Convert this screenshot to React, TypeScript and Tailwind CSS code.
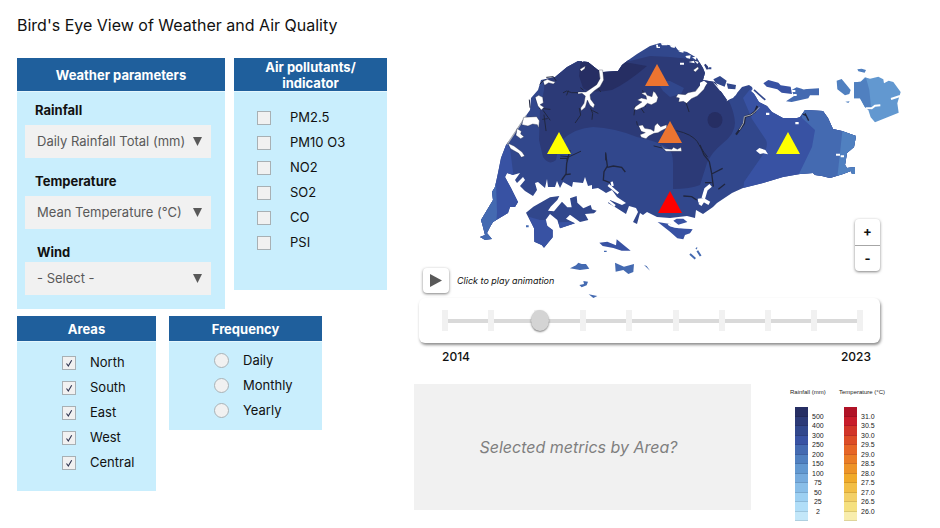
import { useId, useState } from "react";
import type { ReactNode } from "react";

const POLLUTANTS = ["PM2.5", "PM10 O3", "NO2", "SO2", "CO", "PSI"];
const AREAS = ["North", "South", "East", "West", "Central"];
const FREQUENCIES = ["Daily", "Monthly", "Yearly"];

const RAIN_COLORS = ["#262e63", "#2c3a77", "#31478c", "#3852a3", "#446ab1", "#5080c0", "#6298d0", "#76abdd", "#89bee8", "#9dd0f2", "#b1def8", "#c3e7f9"];
const RAIN_LABELS = ["500", "400", "300", "250", "200", "150", "100", "75", "50", "25", "2"];
const TEMP_COLORS = ["#b01226", "#c81c2a", "#d13428", "#dc4c26", "#e66526", "#ea7c26", "#ed9328", "#f0aa2a", "#f2be45", "#f3d067", "#f5e07f", "#f8edad"];
const TEMP_LABELS = ["31.0", "30.5", "30.0", "29.5", "29.0", "28.5", "28.0", "27.5", "27.0", "26.5", "26.0"];

const ISLAND =
  "M498 173 501 158 506 145 512 137 519 126 525 117 530 110 531 98 538 90 541 80 555 77 567 67 578 61 588 62 598 70 603 72 618 71 622 65 627 61 637 54 650 46 660 43 668 45 674 45 678 50 687 52 697 58 703 68 705 73 703 80 715 82 720 90 727 100 733 98 737 93 742 87 749 85 752 87 753 92 759 102 767 106 772 112 783 118 797 118 800 117 805 110 823 111 828 118 833 129 842 131 856 136 854 147 847 153 845 165 847 168 855 167 855 174 852 174 851 171 843 174 830 178 822 176 815 175 813 173 800 174 783 177 763 183 743 188 732 193 717 203 713 207 703 214 696 210 695 218 687 216 670 218 657 217 647 212 643 215 640 213 637 224 633 222 638 212 636 208 629 206 626 214 615 207 608 203 610 200 622 205 626 203 617 197 612 190 606 193 603 191 598 188 592 189 592 185 588 186 585 177 583 183 573 182 572 187 563 182 560 188 557 181 555 187 548 187 547 179 545 188 538 182 535 183 537 190 533 196 525 191 520 186 525 180 523 177 517 183 515 180 520 173 513 175 507 173 505 177 511 188 518 202 515 207 510 207 508 213 493 222 490 227 487 233 492 239 485 240 480 237 485 235 483 227 481 220 487 210 493 200 492 192 495 187Z";

type MarkerProps = { x: number; y: number; fill: string };

function Marker({ x, y, fill }: MarkerProps) {
  return <path d={`M${x} ${y}l12 22h-24z`} fill={fill} />;
}

function RainMap() {
  return (
    <svg viewBox="414 40 500 258" className="block w-full overflow-visible" role="img" aria-label="Rainfall map with station markers">
      <clipPath id="island">
        <path d={ISLAND} />
      </clipPath>
      <g clipPath="url(#island)">
        <rect x="470" y="40" width="400" height="210" fill="#31478c" />
        <path d="M546 60 544 90 540 110 539 140 543 157Q549 166 556 160 558 148 562 140 575 128 593 127 615 128 637 137 657 141 668 148 673 152 673 163V189Q690 189 700 185L707 163Q712 152 722 144 735 134 735 123 734 104 716 80L712 64 690 59 670 57 650 56 630 61 618 55Z" fill="#2c3a77" />
        <path d="M581 58 579 76 583 88Q590 94 612 90 627 83 647 66L630 63 610 60Z" fill="#262e63" />
        <ellipse cx="715" cy="120" rx="7.5" ry="8" fill="#262e63" />
        <path d="M656 80 670 81 684 88 681 94 670 97 663 91Z" fill="#31478c" />
        <path d="M475 140H509L513 172 520 210 470 245Z" fill="#3852a3" />
        <path d="M475 175 496 182 497 212 495 245H470Z" fill="#446ab1" />
        <path d="M756 82 743 98 752 119 766 140Q769 146 762 156L744 182 743 195H870V80Z" fill="#3852a3" />
        <path d="M801 100 802 118 815 130 812 147 797 178H870V100Z" fill="#446ab1" />
        <path d="M843 125 840 153 837 180H870V125Z" fill="#5080c0" />
      </g>

      {/* north-west and central reservoirs */}
      <g transform="translate(500 60) scale(.33333)" strokeLinecap="round" strokeLinejoin="round">
        <g fill="none" stroke="#20263f" strokeWidth="3">
          <path d="M190 98 200 93 215 98 232 98M200 105 205 93M238 145 242 165 226 188M272 145 278 160 276 178M278 152 294 160M290 80 302 95M405 140 402 165M420 140 432 158M432 102 428 92M432 125 436 140M558 128 567 155M412 195 410 185M130 152 150 180M132 165 138 212M128 178 142 176M118 145 150 148M140 52 160 50 168 62M120 72 130 62M88 120 90 142M182 288 208 290 242 274M206 290 200 300M317 278V300M462 258 486 264M250 90 242 84M480 5" />
          <path d="M530 212Q575 222 592 245 600 262 622 290" />
        </g>
        <path d="M78 168 22 252" stroke="#a8acb4" strokeWidth="4" />
        <g fill="#fff" stroke="#20263f" strokeWidth="1">
          <path d="M297 30 308 30 311 60 300 80 283 92 270 104 272 118 284 134 280 144 270 136 262 120 256 142 244 152 242 144 252 130 256 108 246 100 234 102 234 96 258 96 290 74 300 56Z" />
          <path d="M424 100 436 97 442 106 456 110 460 94 466 98 474 112 470 126 454 134 442 130 432 140 410 150 402 148 406 140 426 126 412 120 424 114 440 118 438 108Z" />
          <path d="M416 197 428 195 434 205 452 208 462 214 464 198 472 190 482 200 500 194 500 204 484 212 474 218 462 220 446 228 438 236 424 232 420 224 436 218 424 214Z" />
          <path d="M482 256 494 266 516 268 520 262 532 268 543 262 545 274 528 274 498 274Z" />
          <path d="M606 68 620 70 612 88 592 108 574 116 560 130 550 124 536 126 538 114 528 112 534 102 556 104 564 98 586 94Z" />
          <path d="M72 172 110 170 118 182 116 204 112 194 98 192 84 198 66 194Z" />
          <path d="M106 112 116 106 128 112 130 128 120 134 132 142 124 150 114 138Z" />
          <path d="M130 64 142 58 152 62 166 66 160 72 146 68 134 76Z" />
          <path d="M52 206 64 214 62 222 72 230 62 236 48 226Z" />
          <path d="M24 250 42 258 66 276 74 288 64 292 56 280 32 266Z" />
          <path d="M240 28 256 18 254 26 244 34Z" />
          <path d="M580 30 594 20 596 26 586 36Z" />
        </g>
        <g fill="#fff">
          <path d="M242 0 248 6 254 0ZM258 2 266 6 268 0ZM540 8h12v6h-12zM566 6 582 2 584 10ZM584 2 596 6 592 12Z" />
          <path d="M468-46h6v6h6v4h-10zM482-50h20v6h-16zM508-44 526-46 524-36 514-38ZM534-28 552-32 550-22 540-24ZM556-12 572-14 570-4 560-6ZM576-8 590-10 588 0ZM596 4 606 2 604 12Z" />
        </g>
        <path d="M612 14 624 18 620 30ZM626 22h8v6h-8z" fill="#31478c" />
      </g>

      {/* east coast, Ubin and Tekong */}
      <g transform="translate(700 30) scale(.33333)">
        <path d="M15 103 25 118" stroke="#2c3a77" strokeWidth="5" />
        <path d="M0 158 12 152 22 160 0 186ZM38 155 62 176 92 182 112 184 108 195 80 214 82 206 98 198 60 182Z" fill="#fff" />
        <path d="M40 148 60 138 80 152 74 170 48 160ZM80 160 108 165 106 178 84 176Z" fill="#31478c" />
        <path d="M158 178 198 212" stroke="#fff" strokeWidth="14" />
        <path d="M162 180 196 210" stroke="#31478c" strokeWidth="5" />
        <path d="M190 160 205 150 235 158 242 166 272 170 276 192 245 188 232 178 200 170Z" fill="#3852a3" />
        <path d="M275 180 290 172 310 178 357 175 357 196 330 196 325 205 275 216 258 214 282 198Z" fill="#446ab1" />
        <path d="M276 180h10v6h-10zM308 172h8v6h-8zM280 192h10v6h-10zM286 276h10v7h-10zM198 248h10v7h-10zM408 371h12v6h-12zM422 376h10v6h-10z" fill="#fff" />
        <path d="M410 152 425 147 438 163 452 180 448 192 435 196 412 178ZM472 118 485 116 498 120 494 128 475 124ZM436 215 449 214 445 219Z" fill="#5080c0" />
        <path d="M462 157 482 155 495 142 510 146 535 140 550 148 552 160 566 152 580 156 602 186 592 220 596 248 525 277 512 262 505 240 494 230 480 205 462 205Z" fill="#6298d0" />
        <path d="M462 157 482 155 498 143 508 180 514 240 505 240 494 230 480 205 462 205Z" fill="#5080c0" />
        <path d="M498 235 515 235 525 227 541 226M573 207 600 198" fill="none" stroke="#fff" strokeWidth="6" />
        <path d="M172 228 165 245 152 255 135 260 132 280 108 314" fill="none" stroke="#20263f" strokeWidth="6" />
        <path d="M178 232 160 250 152 255 133 260 130 280 118 300" fill="none" stroke="#a8acb4" strokeWidth="3" />
        <path d="M168 362 178 354 196 360 204 373 190 370 180 372Z" fill="#fff" />
        <path d="M308 252 320 258M315 250 326 272M0 345 12 375 28 395 35 430 40 470M35 432 68 415M15 458 35 458M55 478 75 462" fill="none" stroke="#20263f" strokeWidth="4" />
      </g>

      {/* Jurong, Sentosa and the southern islands */}
      <g transform="translate(470 150) scale(.33333)">
        <path d="M168 188 190 170 240 142 268 138 262 150 242 170 234 182 252 184 262 172 276 155 292 172 305 172 300 145 320 138 322 158 340 175 362 165 366 178 380 182 372 190 345 192 355 210 330 216 300 194 288 206 315 220 270 235 262 210 240 192 225 212 232 228 248 240 248 262 222 293 215 285 193 275 192 235Z" fill="#31478c" />
        <path d="M176 200 210 210 228 210 232 228 248 240 248 262 222 293 215 285 193 275 192 235ZM265 217 300 216 315 220 270 235Z" fill="#3852a3" />
        <path d="M563 216 600 222 612 232 668 238 660 250 645 255 640 268 622 265 600 245ZM610 212 620 206 640 206 652 216 625 224ZM388 278 412 275 438 286 440 268 460 284 482 302 455 302 430 294 398 288Z" fill="#3852a3" />
        <path d="M595 222Q610 235 660 232" fill="none" stroke="#fff" strokeWidth="6" />
        <path d="M300 355 318 346 325 338 335 342 348 342 358 356 330 360ZM435 338 462 350 492 342 490 366 475 372 460 360 437 365ZM522 345 530 348 540 362ZM328 405 342 402 340 393 354 395 350 406 335 412ZM356 433 382 438 370 444ZM168 226h8v6h-8zM402 302h8v4h-8z" fill="#446ab1" />
        <path d="M660 312 676 326M682 302 692 318M678 294 681 296" stroke="#446ab1" strokeWidth="6" />
        <path d="M684 152 700 150 718 160M700 145 708 118 722 106M690 165 700 150" fill="none" stroke="#fff" strokeWidth="11" />
        <path d="M415 152 435 168M415 105 435 122 445 130M425 95 428 108" fill="none" stroke="#fff" strokeWidth="7" />
        <path d="M407 10 412 48 402 65 400 90 420 98M412 52 430 48 455 52 466 66M300 0 290 40 288 72 275 90M270 25H296M288 74 302 72M640 138 665 140 680 150" fill="none" stroke="#20263f" strokeWidth="4" />
      </g>

      <Marker x={657} y={64} fill="#ec7430" />
      <Marker x={670} y={121} fill="#ec7430" />
      <Marker x={559} y={132} fill="#ffff00" />
      <Marker x={788} y={132} fill="#ffff00" />
      <Marker x={670} y={191} fill="#ff0000" />
    </svg>
  );
}

type PanelProps = { title: ReactNode; className: string; headClass: string; children: ReactNode };

function Panel({ title, className, headClass, children }: PanelProps) {
  return (
    <section className={`bg-[#c9eefd] ${className}`}>
      <h2 className={`flex items-center justify-center border-b border-[#e4f6fd] bg-[#1f5f9c] text-center text-[13px] leading-4 font-bold text-white ${headClass}`}>
        {title}
      </h2>
      {children}
    </section>
  );
}

type SelectFieldProps = { label: string; options: string[]; labelClass: string };

function SelectField({ label, options, labelClass }: SelectFieldProps) {
  const id = useId();
  return (
    <div>
      <label htmlFor={id} className={`block text-[13px] leading-5 font-bold ${labelClass}`}>
        {label}
      </label>
      <div className="relative">
        <select id={id} className="block h-[33px] w-full appearance-none bg-[#f1f1f1] pl-3 text-[13px] text-[#595959]">
          {options.map((o) => (
            <option key={o}>{o}</option>
          ))}
        </select>
        <svg viewBox="0 0 9 9" className="pointer-events-none absolute top-3 right-[9px] size-[9px]" aria-hidden="true">
          <path d="M0 0h9L4.500 9z" fill="#595959" />
        </svg>
      </div>
    </div>
  );
}

type CheckRowProps = { label: string; defaultChecked?: boolean };

function CheckRow({ label, defaultChecked }: CheckRowProps) {
  return (
    <label className="flex h-[25px] items-center">
      <span className="grid">
        <input
          type="checkbox"
          defaultChecked={defaultChecked}
          className="peer col-start-1 row-start-1 size-[14px] appearance-none border border-[#a8b0b4] bg-[#f1f1f1]"
        />
        <svg viewBox="0 0 14 14" className="pointer-events-none invisible col-start-1 row-start-1 size-[14px] peer-checked:visible" aria-hidden="true">
          <path d="M4.500 7.500 6.300 10 9.700 4.200" fill="none" stroke="#2e3450" strokeWidth="1.100" />
        </svg>
      </span>
      <span className={defaultChecked ? "ml-[14px]" : "ml-[19px]"}>{label}</span>
    </label>
  );
}

type LegendProps = { title: string; colors: string[]; labels: string[]; className: string };

function Legend({ title, colors, labels, className }: LegendProps) {
  return (
    <figure className={className}>
      <figcaption className="text-[6px] leading-4 whitespace-nowrap text-[#222]">{title}</figcaption>
      <div className="mt-[7px] ml-[5px] flex h-[114px] gap-1">
        <div className="flex w-[13px] flex-col">
          {colors.map((c) => (
            <div key={c} className="flex-1 border-b border-black/10" style={{ backgroundColor: c }} />
          ))}
        </div>
        <ul className="flex flex-col py-[5px] text-center text-[7px] leading-[9px] text-[#222]">
          {labels.map((l) => (
            <li key={l} className="flex-1">{l}</li>
          ))}
        </ul>
      </div>
    </figure>
  );
}

export default function App() {
  const [year, setYear] = useState(2016.05);
  return (
    <div className="min-h-screen bg-white px-[17px] pb-1 font-['Inter','Liberation_Sans',sans-serif] text-[13px] text-[#111]">
      <h1 className="pt-[13px] text-base leading-6">Bird's Eye View of Weather and Air Quality</h1>
      <main className="flex items-start gap-[27px] pt-[3px]">
        <div className="w-[370px] shrink-0 pt-[18px]">
          <div className="flex items-start gap-[9px]">
            <Panel title="Weather parameters" className="w-[208px]" headClass="h-[34px]">
              <div className="flex flex-col gap-[13px] pt-2 pr-[14px] pb-[14px] pl-2">
                <SelectField label="Rainfall" options={["Daily Rainfall Total (mm)"]} labelClass="mb-[5px] pl-[10px]" />
                <SelectField label="Temperature" options={["Mean Temperature (°C)"]} labelClass="mb-[5px] pl-[10px]" />
                <SelectField label="Wind" options={["- Select -"]} labelClass="pl-3" />
              </div>
            </Panel>
            <Panel title={<>Air pollutants/<br />indicator</>} className="flex-1" headClass="h-[34px]">
              <div className="pt-[13px] pb-[35px] pl-[23px]">
                {POLLUTANTS.map((p) => (
                  <CheckRow key={p} label={p} />
                ))}
              </div>
            </Panel>
          </div>
          <div className="mt-[7px] flex items-start gap-[13px]">
            <Panel title="Areas" className="w-[139px]" headClass="h-[26px]">
              <div className="pt-2 pb-4 pl-[45px]">
                {AREAS.map((a) => (
                  <CheckRow key={a} label={a} defaultChecked />
                ))}
              </div>
            </Panel>
            <Panel title="Frequency" className="w-[153px]" headClass="h-[26px]">
              <div className="pt-[6px] pb-[7px] pl-[45px]">
                {FREQUENCIES.map((f) => (
                  <label key={f} className="flex h-[25px] items-center gap-[14px]">
                    <input type="radio" name="frequency" className="size-[15px] appearance-none rounded-full border border-[#a9b2b6] bg-[#f1f1f1] checked:bg-[#595959]" />
                    {f}
                  </label>
                ))}
              </div>
            </Panel>
          </div>
        </div>

        <div className="min-w-0 flex-1 pr-[9px]">
          <div className="relative">
            <RainMap />
            <div className="absolute bottom-[5px] left-[9px] flex items-center gap-2">
              <button type="button" aria-label="Play" className="flex h-[25px] w-[26px] items-center justify-center rounded bg-white shadow-[0_1px_3px_rgba(0,0,0,0.5)]">
                <svg viewBox="0 0 12 13" className="h-[13px] w-3" aria-hidden="true">
                  <path d="M0 0 12 6.500 0 13z" fill="#595959" />
                </svg>
              </button>
              <span className="text-[9px] italic">Click to play animation</span>
            </div>
            <div className="absolute right-[34px] bottom-[27px] flex h-[52px] w-[25px] flex-col divide-y divide-[#a6a6a6] rounded bg-white text-[13px] font-bold shadow-[0_1px_3px_rgba(0,0,0,0.5)]">
              <button type="button" aria-label="Zoom in" className="flex-1">+</button>
              <button type="button" aria-label="Zoom out" className="flex-1">-</button>
            </div>
          </div>

          <div className="relative mr-[34px] ml-[5px] grid h-[45px] items-center rounded-md bg-white shadow-[1px_2px_3px_rgba(0,0,0,0.45)]">
            <div className="col-start-1 row-start-1 mr-5 ml-[26px] h-1 bg-[#d9d9d9]" />
            <div className="col-start-1 row-start-1 mr-[17px] ml-[23px] flex justify-between">
              {Array.from({ length: 10 }, (_, i) => (
                <span key={i} className="h-[21px] w-[6px] bg-[#f1f1f1]" />
              ))}
            </div>
            <input
              type="range"
              aria-label="Year"
              min={2014}
              max={2023}
              step="any"
              value={year}
              onChange={(e) => setYear(Number(e.target.value))}
              className="col-start-1 row-start-1 mr-[11px] ml-[17px] h-[21px] appearance-none bg-transparent [&::-webkit-slider-thumb]:h-[21px] [&::-webkit-slider-thumb]:w-[18px] [&::-webkit-slider-thumb]:appearance-none [&::-webkit-slider-thumb]:rounded-[50%] [&::-webkit-slider-thumb]:bg-[#d4d4d4] [&::-webkit-slider-thumb]:shadow-[0_1px_2px_rgba(0,0,0,0.5)]"
            />
          </div>
          <div className="mt-1 mr-[43px] ml-[28px] flex justify-between text-xs leading-5 font-medium">
            <span>2014</span>
            <span>2023</span>
          </div>

          <div className="mt-[17px] flex items-start">
            <div className="flex h-[126px] flex-1 items-center justify-center bg-[#f1f1f1] pr-2 text-base text-[#7f7f7f] italic">
              Selected metrics by Area?
            </div>
            <div className="ml-[39px] flex w-[124px] font-['Liberation_Sans',sans-serif]">
              <Legend title="Rainfall (mm)" colors={RAIN_COLORS} labels={RAIN_LABELS} className="w-[49px]" />
              <Legend title="Temperature (°C)" colors={TEMP_COLORS} labels={TEMP_LABELS} className="flex-1" />
            </div>
          </div>
        </div>
      </main>
    </div>
  );
}
